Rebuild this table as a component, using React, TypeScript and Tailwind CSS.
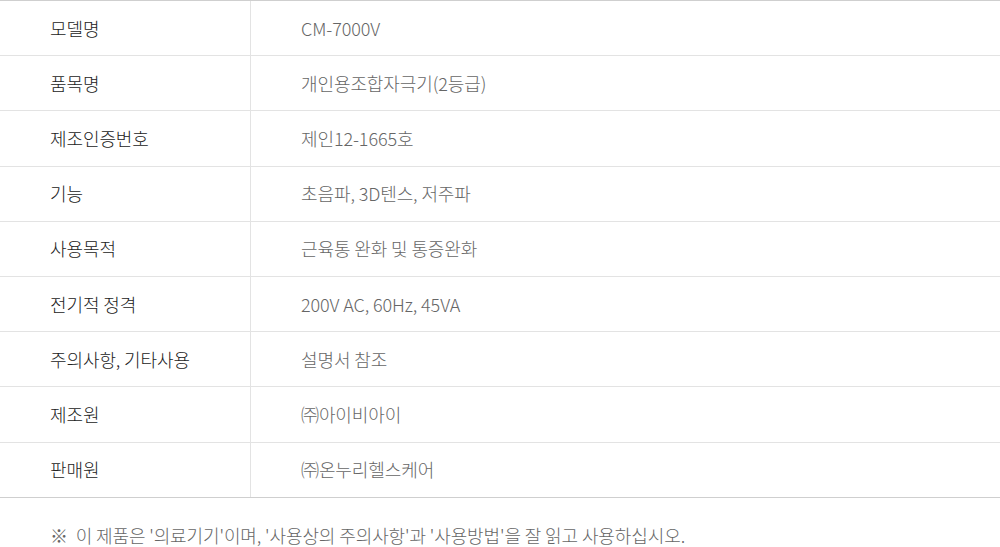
const rows: [string, string][] = [
  ["모델명", "CM-7000V"],
  ["품목명", "개인용조합자극기(2등급)"],
  ["제조인증번호", "제인12-1665호"],
  ["기능", "초음파, 3D텐스, 저주파"],
  ["사용목적", "근육통 완화 및 통증완화"],
  ["전기적 정격", "200V AC, 60Hz, 45VA"],
  ["주의사항, 기타사용", "설명서 참조"],
  ["제조원", "㈜아이비아이"],
  ["판매원", "㈜온누리헬스케어"],
];

export default function App() {
  return (
    <div
      className="w-[1000px] h-[547px] bg-white overflow-hidden font-light"
      style={{ fontFamily: '"Noto Sans CJK KR", "Noto Sans", sans-serif' }}
    >
      <div className="border-t border-b border-[#cfcfcf]">
        {rows.map(([label, value], i) => (
          <div
            key={label}
            className={
              i < rows.length - 1
                ? "flex h-[55.2px] box-border border-b border-[#e3e3e3]"
                : "flex h-[54.2px]"
            }
          >
            <div className="w-[251px] shrink-0 flex items-center pl-[50px] border-r border-[#e3e3e3] text-[18px] text-[#222] tracking-[-0.1px]">
              {label}
            </div>
            <div className="flex items-center pl-[50px] text-[18px] text-[#666] tracking-[-0.1px]">
              {value}
            </div>
          </div>
        ))}
      </div>
      <p className="pl-[50px] pt-[24px] text-[18px] text-[#666] tracking-[-0.1px]">
        ※&nbsp; 이 제품은 '의료기기'이며, '사용상의 주의사항'과 '사용방법'을 잘 읽고 사용하십시오.
      </p>
    </div>
  );
}
